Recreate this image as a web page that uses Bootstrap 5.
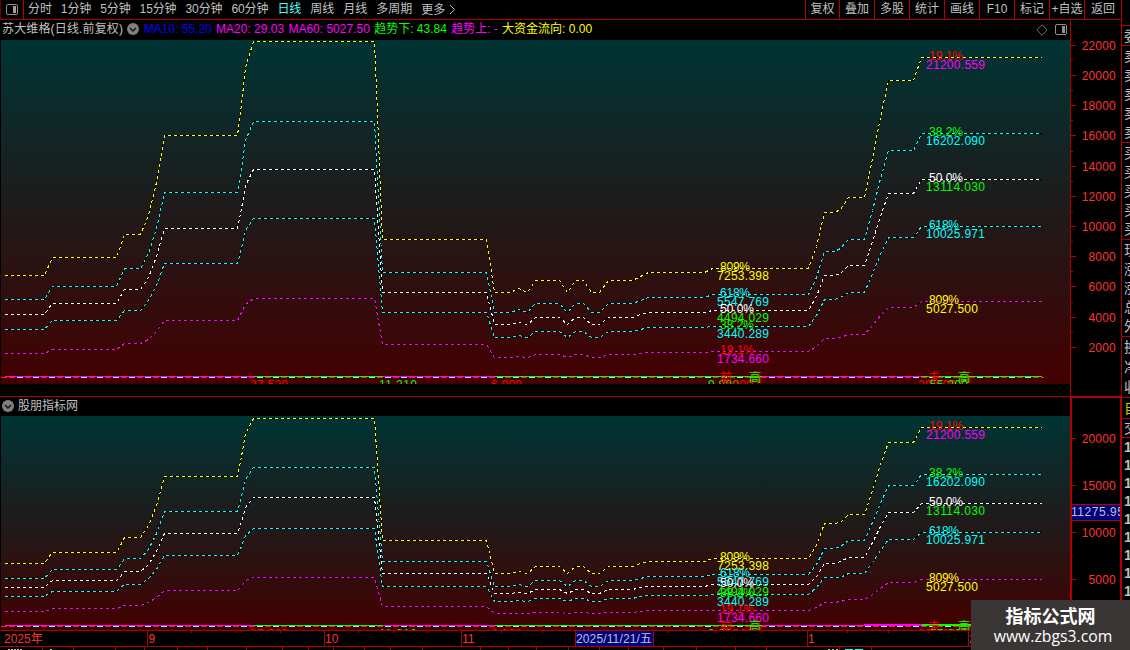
<!DOCTYPE html>
<html lang="zh-CN">
<head>
    <meta charset="UTF-8">
    <meta name="viewport" content="width=device-width, initial-scale=1.0">
    <title>苏大维格 日线</title>
    <link href="https://cdn.jsdelivr.net/npm/bootstrap@5.3.0/dist/css/bootstrap.min.css" rel="stylesheet">
    <script src="https://cdn.jsdelivr.net/npm/bootstrap@5.3.0/dist/js/bootstrap.bundle.min.js"></script>
    <style>
        :root { --line: #b00000; --grey: #c0c0c0; }
        body {
            width: 1130px;
            height: 650px;
            background: #000;
            color: var(--grey);
            font: 12px/18px "Liberation Sans", "Noto Sans CJK SC", sans-serif;
        }
        svg { display: block; flex: none; }
        svg text { font: 12px "Liberation Sans", "Noto Sans CJK SC", sans-serif; }
        .main-col { width: 1121px; }
        .topbar { height: 20px; border-bottom: 1px solid var(--line); }
        .layout-btn { width: 24px; border-right: 1px solid var(--line); border-left: 1px solid #700000; }
        .periods { gap: 9px; padding-left: 4px; letter-spacing: -.1px; }
        .periods .current { color: #54fcfc; }
        .periods .current ~ span { letter-spacing: 0; }
        .tool { width: 35px; border-left: 1px solid var(--line); }
        .tool:first-child { width: 34px; }
        .tool:last-child { width: 37px; }
        .upper { height: 376px; }
        .lower { height: 254px; }
        .plot-col { width: 1070px; }
        .lower .plot-col { border-top: 1px solid var(--line); }
        .info { height: 20px; gap: 4.3px; padding: 0 3px 2px 2px; }
        .lower .info { height: 19px; gap: 4px; }
        .c-blue { color: #0000ff; }
        .c-mag { color: #ff00ff; }
        .c-green { color: #00ff00; }
        .c-yellow { color: #ffff00; }
        .stock-name { letter-spacing: .15px; }
        .pane-icons { gap: 7px; padding-top: 1px; }
        .scale { width: 51px; }
        .scale .tick-label { letter-spacing: .2px; }
        .upper .scale { border-left: 1px solid var(--line); }
        .lower .scale { border: 2px solid var(--line); border-right-width: 1px; border-bottom: 0; }
        .side { width: 9px; border-left: 1px solid var(--line); }
        .quote-group { border-bottom: 1px solid var(--line); padding-left: 2px; font-size: 14px; display: flex; flex-direction: column; justify-content: space-around; }
        .quote-group span { display: block; height: 18px; white-space: nowrap; }
        .g-head { height: 26px; }
        .g-wei { height: 20px; }
        .g-five { height: 97px; }
        .g-three { height: 61px; }
        .g-tab { height: 21px; color: #d8c800; }
        .g-deal { height: 19px; }
        .g-ticks { border: 0; justify-content: flex-start; font-weight: bold; }
        .site-tag { right: 0; bottom: 0; width: 159px; height: 50px; background: #3b3636; color: #fff; }
        .site-tag b { font: bold 18px/22px "Noto Sans CJK SC", sans-serif; }
        .site-tag span { font: 15.75px/20px "Open Sans", sans-serif; padding-left: 5px; }
    </style>
</head>
<body class="position-relative overflow-hidden d-flex">
    <div class="main-col flex-shrink-0 d-flex flex-column">
        <div class="topbar d-flex flex-shrink-0 text-nowrap">
            <div class="layout-btn d-flex align-items-center justify-content-center">
                <svg width="12" height="11" viewBox="0 0 12 11"><rect x=".5" y=".5" width="11" height="10" rx="1.5" fill="none" stroke="#909090"/><rect x="7" y="2" width="3" height="7" fill="#a0a0a0"/></svg>
            </div>
            <div class="periods d-flex">
                <span>分时</span><span>1分钟</span><span>5分钟</span><span>15分钟</span><span>30分钟</span><span>60分钟</span><span class="current">日线</span><span>周线</span><span>月线</span><span>多周期</span>
                <span class="d-flex align-items-center">更多<svg class="ms-1" width="7" height="11" viewBox="0 0 7 11"><path d="M1 1l4.5 4.5L1 10" fill="none" stroke="#c0c0c0"/></svg></span>
            </div>
            <div class="d-flex ms-auto text-center">
                <div class="tool">复权</div><div class="tool">叠加</div><div class="tool">多股</div><div class="tool">统计</div><div class="tool">画线</div><div class="tool">F10</div><div class="tool">标记</div><div class="tool">+自选</div><div class="tool">返回</div>
            </div>
        </div>

        <div class="upper d-flex flex-shrink-0">
            <div class="plot-col">
                <div class="info d-flex align-items-center text-nowrap">
                    <span class="stock-name">苏大维格(日线.前复权)</span>
                    <svg width="12" height="12" viewBox="0 0 12 12"><circle cx="6" cy="6" r="6" fill="#808080"/><path d="M3 5l3 3 3-3" fill="none" stroke="#111" stroke-width="1.4"/></svg>
                    <span class="c-blue">MA10: 55.20</span>
                    <span class="c-mag">MA20: 29.03</span>
                    <span class="c-mag">MA60: 5027.50</span>
                    <span class="c-green">趋势下: 43.84</span>
                    <span class="c-mag">趋势上: -</span>
                    <span class="c-yellow">大资金流向: 0.00</span>
                    <div class="pane-icons d-flex align-items-center ms-auto">
                        <svg width="12" height="12" viewBox="0 0 12 12"><path d="M6 .8L11.2 6 6 11.2.8 6z" fill="none" stroke="#707070"/></svg>
                        <svg width="12" height="11" viewBox="0 0 12 11"><rect x=".5" y=".5" width="11" height="10" rx="1.5" fill="none" stroke="#909090"/><rect x="7" y="2" width="3" height="7" fill="#909090"/></svg>
                    </div>
                </div>
                <svg id="plotUpper" width="1070" height="344" viewBox="0 40 1070 344"></svg>
            </div>
            <div class="scale"><svg id="scaleUpper" width="50" height="376" viewBox="1071 20 50 376"></svg></div>
        </div>

        <div class="lower d-flex flex-shrink-0">
            <div class="plot-col">
                <div class="info d-flex align-items-center">
                    <svg width="12" height="12" viewBox="0 0 12 12"><circle cx="6" cy="6" r="6" fill="#808080"/><path d="M3 5l3 3 3-3" fill="none" stroke="#111" stroke-width="1.4"/></svg>
                    <span>股朋指标网</span>
                </div>
                <svg id="plotLower" width="1070" height="214" viewBox="0 416 1070 214"></svg>
                <svg id="dates" width="1070" height="20" viewBox="0 630 1070 20"></svg>
            </div>
            <div class="scale"><svg id="scaleLower" width="48" height="252" viewBox="1072 398 48 252"></svg></div>
        </div>
    </div>

    <div class="side flex-shrink-0 overflow-hidden">
        <div class="quote-group g-head"></div>
        <div class="quote-group g-wei"><span>委</span></div>
        <div class="quote-group g-five"><span>卖</span><span>卖</span><span>卖</span><span>卖</span><span>卖</span></div>
        <div class="quote-group g-five"><span>买</span><span>买</span><span>买</span><span>买</span><span>买</span></div>
        <div class="quote-group g-five"><span>现</span><span>涨</span><span>涨</span><span>总</span><span>外</span></div>
        <div class="quote-group g-three"><span>换</span><span>净</span><span>收</span></div>
        <div class="quote-group g-tab"><span>自</span></div>
        <div class="quote-group g-deal"><span>交</span></div>
        <div class="quote-group g-ticks"><span>1</span><span>1</span><span>1</span><span>1</span><span>1</span><span>1</span><span>1</span><span>1</span><span>1</span></div>
    </div>

    <div class="site-tag position-absolute d-flex flex-column align-items-center justify-content-center">
        <b>指标公式网</b>
        <span>www.zbgs3.com</span>
    </div>

    <script>
        const YELLOW = '#ffff00', CYAN = '#00ffff', WHITE = '#ffffff', MAG = '#ff00ff', GREEN = '#00ff00', RED = '#ff0000';
        const AXIS = '#b00000', LABEL = '#ff3232';

        // x and height of the 80.9% line on the upper plot
        const points = [
            [4, 275.5], [44, 275.5], [48, 266], [52, 257.5], [116, 257.5], [120, 246], [124, 234.5], [140, 234.5],
            [148, 215], [156, 182], [164, 135.5], [237, 135.5], [241, 104], [245, 67], [253, 41.5], [374, 41.5],
            [382, 239.5], [486, 239.5], [494, 292], [510, 292], [518, 288.3], [527, 292], [535, 280.5], [559, 280.5],
            [567, 292], [575, 280.5], [583, 280.5], [591, 292], [599, 292], [608, 280.5], [632, 280.5], [640, 276],
            [648, 272.5], [704, 272.5], [712, 268.4], [808, 268.4], [816, 246], [824, 212], [834, 212], [840, 209],
            [848, 196.8], [864, 196.8], [872, 158], [880, 117], [888, 80.4], [913, 80.4], [921, 57.4], [1041, 57.4]
        ];
        const levels = [[.809, YELLOW], [.618, CYAN], [.5, WHITE], [.382, CYAN], [.191, MAG]];
        const leftLabels = [
            [.809, '809%', YELLOW, '7253.398', YELLOW], [.618, '618%', CYAN, '5547.769', CYAN],
            [.5, '50.0%', WHITE, '4494.029', GREEN], [.382, '38.2%', GREEN, '3440.289', CYAN],
            [.191, '19.1%', RED, '1734.660', MAG]
        ];
        const rightLabels = [
            [.809, '19.1%', RED, '21200.559', MAG], [.618, '38.2%', GREEN, '16202.090', CYAN],
            [.5, '50.0%', WHITE, '13114.030', GREEN], [.382, '618%', CYAN, '10025.971', CYAN],
            [.191, '809%', YELLOW, '5027.500', YELLOW]
        ];

        function text(x, y, s, color, width) {
            const len = width ? ` textLength="${width}"` : '';
            return `<text x="${x}" y="${y}" fill="${color}"${len}>${s}</text>`;
        }

        function hline(x1, x2, y, color, extra = '') {
            return `<path d="M${x1} ${y}H${x2}" stroke="${color}" shape-rendering="crispEdges" ${extra}/>`;
        }

        function vline(x, y1, y2, color) {
            return `<path d="M${x} ${y1}V${y2}" stroke="${color}" shape-rendering="crispEdges"/>`;
        }

        function drawPlot(id, top, bottom, base, ratio) {
            const yAt = (h, k) => Math.floor(base - (377 - h) / .809 * k * ratio) + .5;
            let out = `<defs><linearGradient id="${id}Bg" x1="0" y1="0" x2="0" y2="1">
                <stop offset="0" stop-color="#003434"/><stop offset=".5" stop-color="#201a1a"/><stop offset="1" stop-color="#440000"/>
                </linearGradient></defs><rect x="1" y="${top}" width="1069" height="${bottom - top}" fill="url(#${id}Bg)"/>`;
            for (const [k, color] of levels) {
                const pts = points.map(([x, h]) => `${x + .5},${yAt(h, k)}`).join(' ');
                out += `<polyline points="${pts}" fill="none" stroke="#000" shape-rendering="crispEdges"/>`;
                out += `<polyline points="${pts}" fill="none" stroke="${color}" stroke-dasharray="3 3" shape-rendering="crispEdges"/>`;
            }
            for (const [labels, x, h] of [[leftLabels, 717, 268.4], [rightLabels, 926, 57.4]]) {
                for (const [k, pct, c1, val, c2] of labels) {
                    const y = yAt(h, k) - .5;
                    out += text(x + 3, y + 3, pct, c1, pct.length === 5 ? 34 : 30);
                    out += text(x, y + 12, val, c2, val.length === 9 ? 59 : 52);
                }
            }
            // prices and marks along the zero line
            const b = Math.floor(base);
            out += text(250, b + 12, '27.520', RED, 38) + text(379, b + 12, '11.210', GREEN, 38) + text(491, b + 12, '6.000', RED, 31);
            out += text(708, b + 12, '9.880', GREEN, 31) + text(722, b + 12, '0.000', RED, 31);
            out += text(918, b + 12, '28.000', RED, 38) + text(930, b + 12, '55.200', GREEN, 38);
            for (const [x1, x2, color] of [[5, 254, MAG], [254, 383, GREEN], [383, 495, MAG], [495, 762, GREEN], [762, 922, MAG], [922, 1042, GREEN]]) {
                out += hline(x1, x2, b - .5, color);
            }
            out += hline(1, 1044, b + .5, '#000');
            out += hline(1, 1044, b + .5, '#ff2020', 'stroke-dasharray="6 2"');
            out += hline(17, 1040, b + .5, '#80ffff', 'stroke-dasharray="6 10"');
            out += text(720, b + 5, '前', RED) + text(750, b + 5, '高', RED);
            out += text(928, b + 5, '未', RED) + text(959, b + 5, '高', RED);
            out += text(749, b + 5, '高', GREEN) + text(958, b + 5, '高', GREEN);
            if (id === 'plotLower') out += hline(864, 922, b - 1.5, MAG) + hline(922, 971, b - 1.5, GREEN);
            document.getElementById(id).innerHTML = out;
        }

        function drawScale(first, last, step, yOf) {
            let out = '';
            for (let v = first; v <= last; v += step) {
                const y = Math.floor(yOf(v)) + .5;
                out += hline(1071, 1076, y, AXIS);
                out += `<text class="tick-label" x="1116" y="${y + 4}" fill="${LABEL}" text-anchor="end">${v}</text>`;
                if (v < last) out += hline(1071, 1073, Math.floor(yOf(v + step / 2)) + .5, AXIS);
            }
            return out;
        }

        function drawDates() {
            let out = hline(0, 1070, 630.5, AXIS) + hline(0, 1070, 646.5, AXIS);
            for (const x of [147, 324, 461, 807, 968]) out += vline(x + .5, 631, 646, AXIS);
            for (const x of [191, 236, 280, 358, 393, 427, 501, 542, 668, 715, 761, 847, 888, 928]) out += vline(x + .5, 631, 633, AXIS);
            for (const x of [42, 73, 115, 144, 177, 207, 246, 282, 308, 333, 364, 390, 422, 480, 508, 536, 568, 599, 628, 663, 696, 735, 766, 839, 871]) {
                out += vline(x + .5, 647, 650, AXIS);
            }
            out += text(4, 643, '2025年', LABEL) + text(148.5, 643, '9', LABEL) + text(325, 643, '10', LABEL);
            out += text(462, 643, '11', LABEL) + text(808, 643, '1', LABEL) + text(969, 643, '2', LABEL);
            out += '<rect x="575" y="631" width="78" height="15" fill="#000080"/>' + vline(575.5, 631, 646, AXIS) + vline(653.5, 631, 646, AXIS);
            out += text(576, 642.5, '2025/11/21/五', '#c0c0c0', 76);
            out += hline(8, 22, 649.5, '#c0c0c0', 'stroke-dasharray="2 1"') + hline(50, 52, 649.5, '#c0c0c0');
            out += hline(828, 838, 649.5, '#c0c0c0', 'stroke-dasharray="2 2"') + hline(845, 865, 649.5, CYAN, 'stroke-dasharray="8 2"');
            document.getElementById('dates').innerHTML = out;
        }

        drawPlot('plotUpper', 40, 384, 377.3, 1);
        drawPlot('plotLower', 416, 630, 626.3, .6205);
        document.getElementById('scaleUpper').innerHTML = drawScale(2000, 22000, 2000, v => 377.6 - v * .015105);
        document.getElementById('scaleLower').innerHTML = drawScale(5000, 20000, 5000, v => 626.3 - v * .009376) +
            '<rect x="1072" y="505" width="48" height="15" fill="#000080"/>' +
            hline(1072, 1120, 504.5, AXIS) + hline(1072, 1120, 520.5, AXIS) +
            text(1071, 516, '11275.95', '#c0c0c0', 53);
        drawDates();
    </script>
</body>
</html>
